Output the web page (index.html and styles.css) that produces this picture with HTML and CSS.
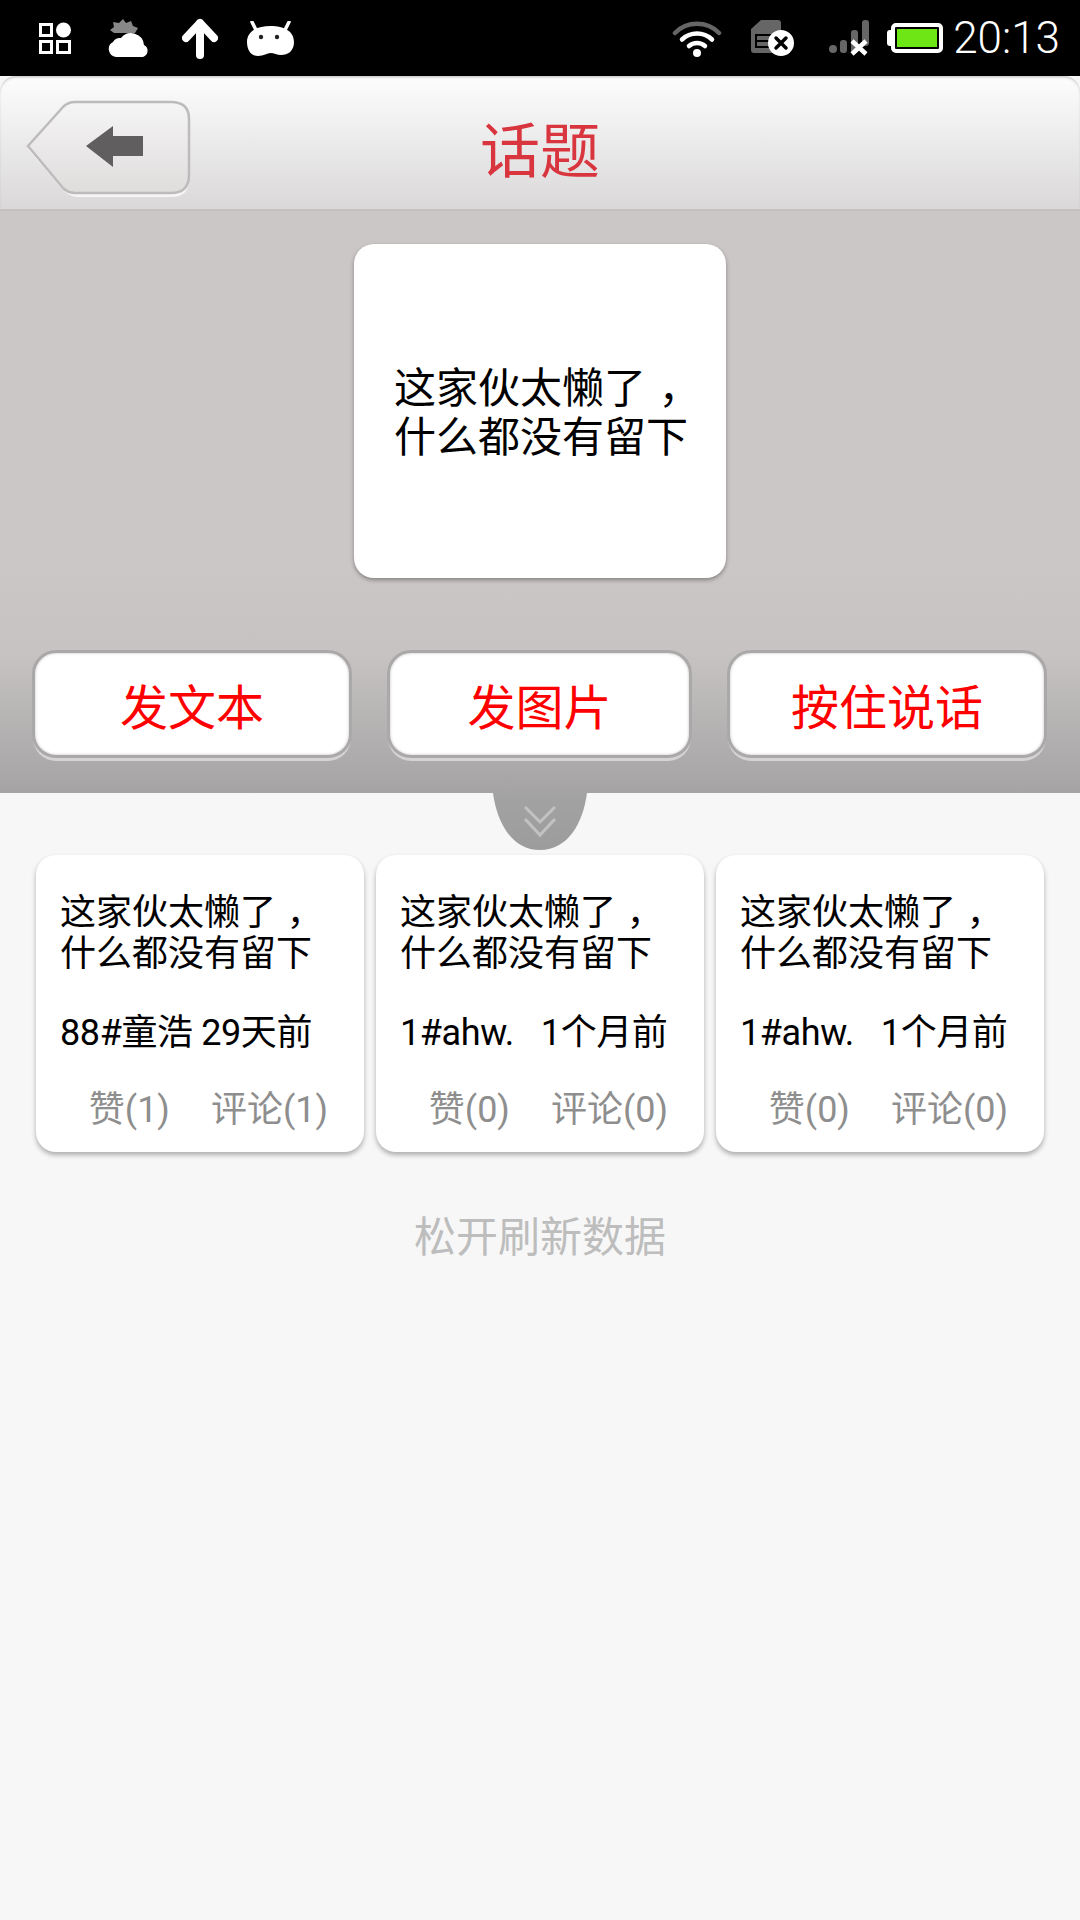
FILE: index.html
```html
<!DOCTYPE html>
<html lang="zh-CN">
<head>
  <meta charset="UTF-8" />
  <meta name="viewport" content="width=device-width, initial-scale=1.0" />
  <title>话题</title>
  <link rel="stylesheet" href="styles.css">
</head>
<body>
  <div class="status-bar">
    <div class="status-left">
      <svg class="ic-grid" width="32" height="32" viewBox="0 0 32 32"><g fill="none" stroke="#fff" stroke-width="3"><rect x="1.500" y="2.500" width="11" height="11"/><rect x="1.500" y="19.500" width="11" height="11"/><rect x="18.500" y="19.500" width="12" height="11"/></g><circle cx="24.500" cy="8" r="7.500" fill="#fff"/></svg>
      <svg class="ic-cloud" width="42" height="38" viewBox="0 0 42 38"><path d="M15 0l3 4 5-2 2 5 5 2-3 5H6L2 11l4-3-1-5 6 1z" fill="#888"/><path d="M8 38a8 8 0 0 1-3-15a8 8 0 0 1 8-4a13 13 0 0 1 23 7a6.500 6.500 0 0 1-1 12z" fill="#fff"/></svg>
      <svg class="ic-up" width="36" height="41" viewBox="0 0 36 41"><path d="M18 37V5M4 20 18 5l14 15" fill="none" stroke="#fff" stroke-width="8" stroke-linecap="round" stroke-linejoin="round"/></svg>
      <svg class="ic-droid" width="47" height="35" viewBox="0 0 47 35"><path d="M5 1l4 8M42 1l-4 8" fill="none" stroke="#fff" stroke-width="3.500" stroke-linecap="round"/><path d="M0 21C0 10 10 5 23.500 5S47 10 47 21c0 9-6 13-13 13-4 0-7-2-10.500-2S17 35 11 35C4 35 0 29 0 21z" fill="#fff"/><circle cx="14" cy="16" r="2.200" fill="#222"/><circle cx="30" cy="16" r="2.200" fill="#222"/></svg>
    </div>
    <div class="status-right">
      <svg class="wifi" width="50" height="38" viewBox="0 0 50 38"><path d="M3 14a31 31 0 0 1 44 0" fill="none" stroke="#666" stroke-width="4.500" stroke-linecap="round"/><g fill="none" stroke="#fff" stroke-width="4.500" stroke-linecap="round"><path d="M10 20.500a22 22 0 0 1 30 0"/><path d="M17 27a12 12 0 0 1 16 0"/></g><circle cx="25" cy="34" r="4" fill="#fff"/></svg>
      <svg class="sim" width="44" height="36" viewBox="0 0 44 36"><path d="M10 0h17a3 3 0 0 1 3 3v30H3a3 3 0 0 1-3-3V9z" fill="#666"/><path d="M5 15h16v12H5z" fill="none" stroke="#000" stroke-width="2"/><path d="M5 21h16" stroke="#000" stroke-width="2"/><circle cx="30" cy="23" r="13" fill="#fff"/><path d="M25 18l10 10M35 18 25 28" stroke="#000" stroke-width="3.500" stroke-linecap="round"/></svg>
      <svg class="signal" width="42" height="36" viewBox="0 0 42 36"><circle cx="5" cy="29" r="4" fill="#666"/><rect x="12" y="20" width="7" height="13" rx="3" fill="#666"/><rect x="23" y="10" width="7" height="23" rx="3" fill="#666"/><rect x="34" y="0" width="7" height="26" rx="3" fill="#666"/><path d="M24 21l14 13M38 21 24 34" stroke="#fff" stroke-width="4.500"/></svg>
      <div class="battery"><div class="battery-level"></div></div>
      <span class="clock">20:13</span>
    </div>
  </div>

  <header class="title-bar">
    <button class="back-btn" aria-label="返回">
      <svg width="166" height="98" viewBox="0 0 166 98">
        <defs><linearGradient id="backFill" x1="0" y1="0" x2="0" y2="1"><stop offset="0" stop-color="#f6f5f5"/><stop offset="1" stop-color="#dfdcdc"/></linearGradient></defs>
        <path d="M2 49 38 10q7-6 14-6h93q18 0 18 18v58q0 17-18 17H52q-7 0-14-6z" fill="#fff" opacity=".75"/>
        <path d="M2 46 37 7q5-5 12-5h96q18 0 18 17v56q0 18-18 18H49q-7 0-12-5z" fill="url(#backFill)" stroke="#bdbbbb" stroke-width="2.500"/>
        <path d="M60 46 87 26v10h30v20H87v11z" fill="#605e5e"/>
      </svg>
    </button>
    <h1>话题</h1>
  </header>

  <section class="profile">
    <div class="signature"><div>这家伙太懒了<span class="comma">，</span><br>什么都没有留下</div></div>
    <div class="actions">
      <button class="action action-text">发文本</button>
      <button class="action action-pic">发图片</button>
      <button class="action action-voice">按住说话</button>
    </div>
    <svg class="pull-tab" width="96" height="58" viewBox="0 0 96 58">
      <defs><linearGradient id="tabFill" x1="0" y1="0" x2="0" y2="1"><stop offset="0" stop-color="#a4a3a3"/><stop offset="1" stop-color="#9c9c9c"/></linearGradient></defs>
      <path d="M1 0H95C91 30 76 57 48 57S5 30 1 0z" fill="url(#tabFill)"/>
      <path d="M33 14l15 15 15-15M33 26l15 16 15-16" fill="none" stroke="#c2c2c2" stroke-width="3"/>
    </svg>
  </section>

  <main class="topics">
    <article class="topic">
      <p class="topic-text">这家伙太懒了<span class="comma">，</span><br>什么都没有留下</p>
      <p class="topic-meta">88#童浩 29天前</p>
      <div class="topic-stats"><span>赞(1)</span><span>评论(1)</span></div>
    </article>
    <article class="topic">
      <p class="topic-text">这家伙太懒了<span class="comma">，</span><br>什么都没有留下</p>
      <p class="topic-meta topic-meta-wide">1#ahw.&nbsp;&nbsp;1个月前</p>
      <div class="topic-stats"><span>赞(0)</span><span>评论(0)</span></div>
    </article>
    <article class="topic">
      <p class="topic-text">这家伙太懒了<span class="comma">，</span><br>什么都没有留下</p>
      <p class="topic-meta topic-meta-wide">1#ahw.&nbsp;&nbsp;1个月前</p>
      <div class="topic-stats"><span>赞(0)</span><span>评论(0)</span></div>
    </article>
  </main>
  <div class="refresh-hint">松开刷新数据</div>
</body>
</html>
```

FILE: styles.css
```css
* {
  box-sizing: border-box;
}
body {
  margin: 0;
  height: 1920px;
  overflow: hidden;
  background: #f7f7f7;
  font-family: Roboto, 'Noto Sans CJK SC', sans-serif;
  color: #000;
}
.status-bar {
  height: 76px;
  background: #000;
  display: flex;
  justify-content: space-between;
  align-items: center;
}
.status-left {
  display: flex;
  align-items: center;
  padding-left: 39px;
}
.ic-cloud {
  margin-left: 37px;
}
.ic-up {
  margin-left: 32px;
}
.ic-droid {
  margin-left: 29px;
}
.status-right {
  display: flex;
  align-items: center;
}
.status-right .wifi {
  margin-right: 29px;
}
.status-right .sim {
  margin-right: 33px;
}
.status-right .signal {
  margin-right: 21px;
}
.battery {
  width: 52px;
  height: 30px;
  border: 4px solid #fff;
  border-radius: 5px;
  padding: 2px;
  position: relative;
}
.battery::before {
  content: '';
  position: absolute;
  left: -8px;
  top: 3px;
  width: 4px;
  height: 16px;
  background: #fff;
  border-radius: 3px 0 0 3px;
}
.battery-level {
  height: 100%;
  background: #6ee514;
}
.clock {
  font-size: 44px;
  font-weight: 300;
  color: #fff;
  margin-left: 10px;
  margin-right: 20px;
}
.title-bar {
  height: 135px;
  background: linear-gradient(#fdfdfd, #dad8d8);
  border-bottom: 2px solid #c2c0c0;
  border-radius: 16px 16px 0 0;
  box-shadow: inset 0 2px 3px -1px #b5b5b5;
  display: flex;
  align-items: center;
  justify-content: center;
  position: relative;
}
.title-bar h1 {
  margin: 8px 0 0;
  font-size: 60px;
  font-weight: 400;
  color: #d9353f;
}
.back-btn {
  position: absolute;
  left: 26px;
  top: 24px;
  padding: 0;
  border: none;
  background: none;
  line-height: 0;
}
.profile {
  height: 582px;
  background: linear-gradient(#cbc7c6 0, #cbc7c6 60%, #c6c3c2 76%, #a5a3a4 100%);
  padding-top: 33px;
  position: relative;
}
.signature {
  width: 372px;
  height: 334px;
  margin: 0 auto;
  background: #fff;
  border-radius: 20px;
  box-shadow: 0 2px 4px rgba(0, 0, 0, 0.35);
  padding: 4px 40px 0;
  display: flex;
  align-items: center;
  font-size: 42px;
  line-height: 49px;
  white-space: nowrap;
}
.comma {
  margin-left: 0.3em;
}
.actions {
  display: flex;
  margin-top: 72px;
  padding-left: 32px;
}
.action {
  height: 108px;
  padding: 0;
  background: #fff;
  border: 3px solid #aaa8a8;
  border-radius: 24px;
  box-shadow: 0 4px 0 -1px #d5d3d3, inset 0 0 3px rgba(0, 0, 0, 0.25);
  color: #ff0000;
  font-family: inherit;
  font-size: 48px;
}
.action-text {
  width: 320px;
}
.action-pic {
  width: 305px;
  margin-left: 35px;
}
.action-voice {
  width: 320px;
  margin-left: 35px;
}
.pull-tab {
  position: absolute;
  left: 492px;
  top: 100%;
}
.topics {
  display: flex;
  gap: 12px;
  padding: 62px 36px 0;
}
.topic {
  width: 328px;
  height: 297px;
  background: #fff;
  border-radius: 20px;
  box-shadow: 0 3px 5px rgba(0, 0, 0, 0.3);
  padding: 38px 24px 0;
}
.topic p {
  margin: 0;
}
.topic-text {
  font-size: 36px;
  line-height: 41px;
  white-space: nowrap;
}
.topic-meta {
  margin-top: 38px !important;
  font-size: 36px;
  line-height: 41px;
  letter-spacing: -0.4px;
  white-space: nowrap;
}
.topic-meta-wide {
  word-spacing: 5px;
}
.topic-stats {
  display: flex;
  justify-content: flex-end;
  gap: 41px;
  margin-top: 36px;
  margin-right: 12px;
  font-size: 36px;
  line-height: 41px;
  color: #8e8e8e;
  white-space: nowrap;
}
.refresh-hint {
  margin-top: 62px;
  text-align: center;
  font-size: 42px;
  line-height: 48px;
  color: #bdbdbd;
}
```
